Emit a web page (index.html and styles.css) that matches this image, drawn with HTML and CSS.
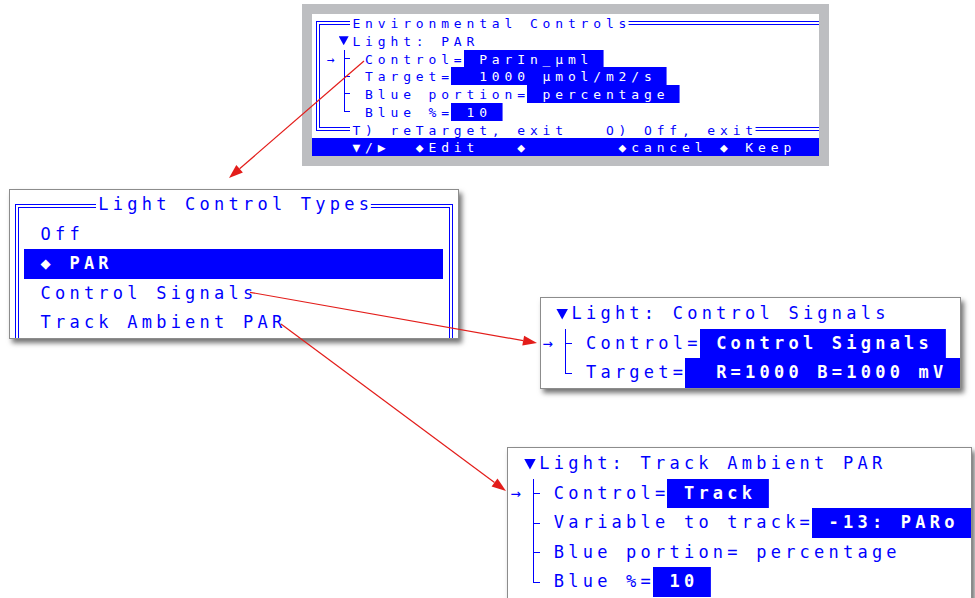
FILE: index.html
```html
<!DOCTYPE html>
<html lang="en">
<head>
    <meta charset="UTF-8">
    <title>Light Control Types</title>
    <link rel="stylesheet" href="styles.css">
</head>
<body>
    <!-- Главный экран -->
    <div class="win env">
        <div class="scr">
            <div class="row"><span class="lead l3"></span><span class="txt"><span class="lbl">Environmental Controls</span></span></div>
            <div class="row"><span class="lead l3 down"></span><span class="txt">Light: PAR</span></div>
            <div class="row"><span class="lead l4 tee"> →</span><span class="txt">Control=<span class="hl"> ParIn_µml </span></span></div>
            <div class="row"><span class="lead l4 tee"></span><span class="txt">Target=<span class="hl">  1000 µmol/m2/s </span></span></div>
            <div class="row"><span class="lead l4 tee"></span><span class="txt">Blue portion=<span class="hl"> percentage </span></span></div>
            <div class="row"><span class="lead l4 end"></span><span class="txt">Blue %=<span class="hl"> 10 </span></span></div>
            <div class="row"><span class="lead l3"></span><span class="txt"><span class="lbl">T) reTarget, exit   O) Off, exit</span></span></div>
            <div class="row bar"><span class="txt">   ▼/▶  ◆Edit   ◆       ◆cancel ◆ Keep</span></div>
        </div>
    </div>

    <!-- Меню типов -->
    <div class="win menu">
        <div class="scr">
            <div class="row"><span class="lead l6"></span><span class="txt"><span class="lbl">Light Control Types</span></span></div>
            <div class="row"><span class="lead l2"></span><span class="txt">Off</span></div>
            <div class="row sel"><span class="lead l1"></span><span class="txt">◆ PAR</span></div>
            <div class="row"><span class="lead l2"></span><span class="txt">Control Signals</span></div>
            <div class="row"><span class="lead l2"></span><span class="txt">Track Ambient PAR</span></div>
        </div>
    </div>

    <!-- Control Signals -->
    <div class="win sig">
        <div class="scr">
            <div class="row"><span class="lead l2 down"></span><span class="txt">Light: Control Signals</span></div>
            <div class="row"><span class="lead l3 tee">→</span><span class="txt">Control=<span class="hl"> Control Signals </span></span></div>
            <div class="row"><span class="lead l3 end"></span><span class="txt">Target=<span class="hl last">  R=1000 B=1000 mV</span></span></div>
        </div>
    </div>

    <!-- Track Ambient PAR -->
    <div class="win track">
        <div class="scr">
            <div class="row"><span class="lead l2 down"></span><span class="txt">Light: Track Ambient PAR</span></div>
            <div class="row"><span class="lead l3 tee">→</span><span class="txt">Control=<span class="hl"> Track </span></span></div>
            <div class="row"><span class="lead l3 tee"></span><span class="txt">Variable to track=<span class="hl last"> -13: PARo</span></span></div>
            <div class="row"><span class="lead l3 tee"></span><span class="txt">Blue portion= percentage</span></div>
            <div class="row"><span class="lead l3 end"></span><span class="txt">Blue %=<span class="hl"> 10 </span></span></div>
        </div>
    </div>

    <!-- Стрелки -->
    <svg class="arrows" width="975" height="598" viewBox="0 0 975 598">
        <g stroke="#e31d1a" stroke-width="1.2" fill="none">
            <line x1="364" y1="61" x2="239.6" y2="168.8"/>
            <line x1="250" y1="292.3" x2="523.2" y2="340.6"/>
            <line x1="281" y1="324" x2="494.5" y2="482.5"/>
        </g>
        <g fill="#e31d1a">
            <polygon points="229,178 242.9,172.6 236.3,165"/>
            <polygon points="537,343 522.3,345.5 524.1,335.7"/>
            <polygon points="506,491 491.6,486.5 497.5,478.4"/>
        </g>
    </svg>
</body>
</html>
```

FILE: styles.css
```css
/* Схема экранов */
:root {
    --blue: #0000ff;
    --line: linear-gradient(var(--blue), var(--blue));
}
body {
    margin: 0;
    width: 975px;
    height: 598px;
    overflow: hidden;
    position: relative;
    background-color: #fff;
    font-family: "DejaVu Sans Mono", monospace;
}
.win {
    position: absolute;
}
.scr {
    --h: calc((var(--cw) - 1ch) / 2);
    --dy: 0px;
    color: var(--blue);
    letter-spacing: calc(var(--cw) - 1ch);
    background-color: #fff;
    overflow: hidden;
}
.row {
    display: flex;
    height: var(--rh);
    line-height: calc(var(--rh) + var(--dy) * 2);
    white-space: pre;
}
.lead {
    flex: none;
    display: flex;
    align-items: center;
    box-sizing: border-box;
    padding-left: var(--h);
    line-height: var(--rh);
}
.l1 { width: var(--cw); }
.l2 { width: calc(var(--cw) * 2); }
.l3 { width: calc(var(--cw) * 3); }
.l4 { width: calc(var(--cw) * 4); }
.l6 { width: calc(var(--cw) * 6); }
.txt {
    padding-left: var(--h);
}
.hl, .lbl {
    display: inline-block;
    vertical-align: top;
    height: var(--rh);
    margin-left: calc(var(--h) * -1);
    padding-left: var(--h);
    background: linear-gradient(var(--c), var(--c)) 0 0 / calc(100% - var(--h)) 100% no-repeat;
}
.hl {
    --c: var(--blue);
    color: #fff;
}
.hl.last {
    padding-right: calc(var(--cw) - var(--h));
    background-size: 100% 100%;
}
.lbl {
    --c: #fff;
}
/* Дерево */
.tee {
    background:
        var(--line) var(--tx) 0 / 1px 100% no-repeat,
        var(--line) var(--tx) 50% / var(--stub) 1px no-repeat;
}
.end {
    background:
        var(--line) var(--tx) 0 / 1px 50% no-repeat,
        var(--line) var(--tx) 50% / var(--stub) 1px no-repeat;
}
.tee, .end {
    padding-top: calc(var(--dy) * 2);
}
.down {
    padding-left: 0;
}
.down::after {
    content: "";
    width: var(--tw);
    height: var(--th);
    margin-left: calc(var(--tc) * var(--cw) + (var(--cw) - var(--tw)) / 2);
    background-color: var(--blue);
    clip-path: polygon(0 0, 100% 0, 50% 100%);
}

/* Environmental Controls */
.env {
    left: 302px;
    top: 4px;
    border: 10px solid #bdbec1;
}
.env .scr {
    --cw: 12.675px;
    --rh: 17.75px;
    --dy: 1.5px;
    --tx: calc(var(--cw) * 2.5);
    --stub: 6px;
    --tc: 2;
    --tw: 10px;
    --th: 9px;
    --cx: calc(var(--cw) / 2 - 0.4px);
    --y0: calc(var(--rh) / 2 + 0.3px);
    --y6: calc(var(--rh) * 6.5 - 0.6px);
    font-size: 13px;
    width: 507px;
    height: 142px;
    background:
        var(--line) calc(var(--cx) - 2px) calc(var(--y0) - 2px) / 100% 1px no-repeat,
        var(--line) calc(var(--cx) + 1px) calc(var(--y0) + 1px) / 100% 1px no-repeat,
        var(--line) calc(var(--cx) - 2px) calc(var(--y6) + 1px) / 100% 1px no-repeat,
        var(--line) calc(var(--cx) + 1px) calc(var(--y6) - 2px) / 100% 1px no-repeat,
        var(--line) calc(var(--cx) - 2px) calc(var(--y0) - 2px) / 1px calc(var(--y6) - var(--y0) + 4px) no-repeat,
        var(--line) calc(var(--cx) + 1px) calc(var(--y0) + 1px) / 1px calc(var(--y6) - var(--y0) - 2px) no-repeat,
        #fff;
}
.bar {
    background-color: var(--blue);
    color: #fff;
}

/* Всплывающие окна */
.menu, .sig, .track {
    border: 1px solid #8c8c8c;
    background-color: #fff;
    box-shadow: 3px 4px 5px rgba(0, 0, 0, 0.55);
}
.menu .scr, .sig .scr, .track .scr {
    --cw: 14.46px;
    --rh: 29.5px;
    --tx: calc(var(--cw) * 1.5 + 3px);
    --stub: 7px;
    --tc: 1;
    --tw: 12px;
    --th: 11px;
    font-size: 17px;
}
.menu .hl, .sig .hl, .track .hl, .sel {
    font-weight: bold;
}
.menu {
    left: 8.5px;
    top: 189.3px;
}
.menu .scr {
    --cx0: calc(var(--cw) / 2);
    --cx1: calc(var(--cw) * 30.5);
    --cy: calc(var(--rh) / 2 + 0.5px);
    width: calc(var(--cw) * 31);
    height: calc(var(--rh) * 5);
    background:
        var(--line) calc(var(--cx0) - 2px) calc(var(--cy) - 2px) / calc(var(--cx1) - var(--cx0) + 4px) 1px no-repeat,
        var(--line) calc(var(--cx0) + 1px) calc(var(--cy) + 1px) / calc(var(--cx1) - var(--cx0) - 2px) 1px no-repeat,
        var(--line) calc(var(--cx0) - 2px) calc(var(--cy) - 2px) / 1px 100% no-repeat,
        var(--line) calc(var(--cx0) + 1px) calc(var(--cy) + 1px) / 1px 100% no-repeat,
        var(--line) calc(var(--cx1) + 1px) calc(var(--cy) - 2px) / 1px 100% no-repeat,
        var(--line) calc(var(--cx1) - 2px) calc(var(--cy) + 1px) / 1px 100% no-repeat,
        #fff;
}
.sel {
    margin-left: var(--cw);
    width: calc(var(--cw) * 29);
    background-color: var(--blue);
    color: #fff;
}
.sig {
    left: 539.5px;
    top: 297.3px;
    padding-top: 1px;
}
.sig .scr {
    width: calc(var(--cw) * 29);
    height: calc(var(--rh) * 3);
}
.track {
    left: 507.3px;
    top: 447.3px;
    padding-top: 1px;
}
.track .scr {
    width: calc(var(--cw) * 32);
    height: calc(var(--rh) * 6);
}
.arrows {
    position: absolute;
    left: 0;
    top: 0;
    pointer-events: none;
}
```
